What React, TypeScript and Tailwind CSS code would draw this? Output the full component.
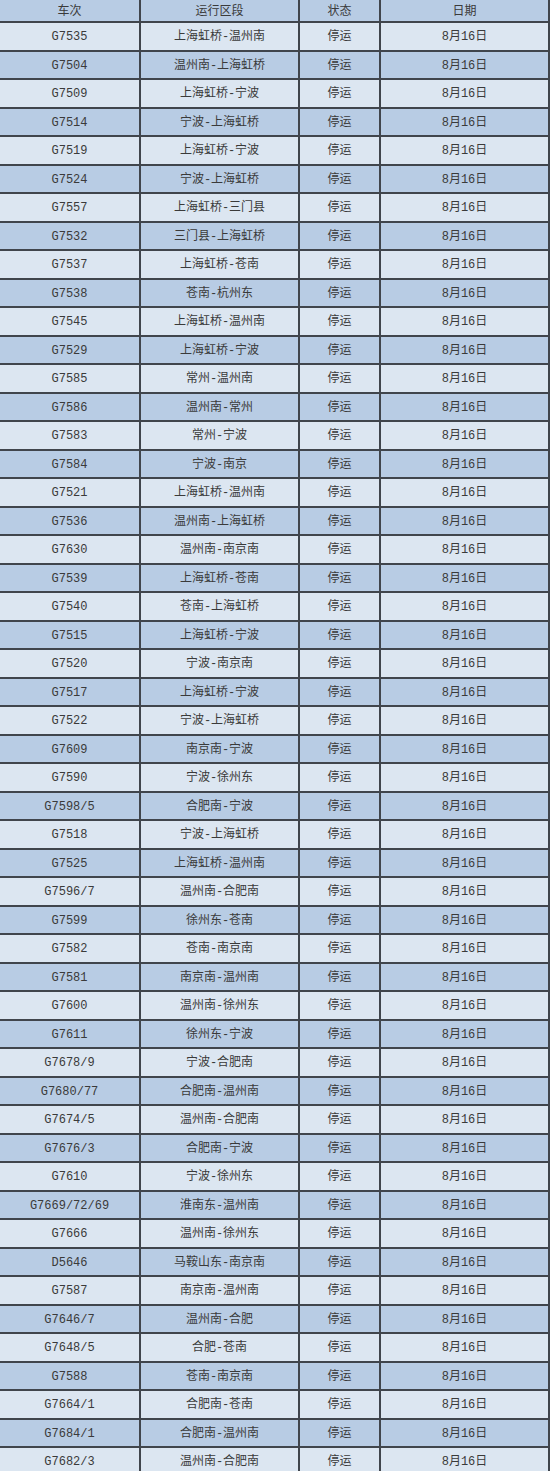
import React from 'react';

// [车次, 运行区段]
const rows: [string, string][] = [
  ['G7535', '上海虹桥-温州南'],
  ['G7504', '温州南-上海虹桥'],
  ['G7509', '上海虹桥-宁波'],
  ['G7514', '宁波-上海虹桥'],
  ['G7519', '上海虹桥-宁波'],
  ['G7524', '宁波-上海虹桥'],
  ['G7557', '上海虹桥-三门县'],
  ['G7532', '三门县-上海虹桥'],
  ['G7537', '上海虹桥-苍南'],
  ['G7538', '苍南-杭州东'],
  ['G7545', '上海虹桥-温州南'],
  ['G7529', '上海虹桥-宁波'],
  ['G7585', '常州-温州南'],
  ['G7586', '温州南-常州'],
  ['G7583', '常州-宁波'],
  ['G7584', '宁波-南京'],
  ['G7521', '上海虹桥-温州南'],
  ['G7536', '温州南-上海虹桥'],
  ['G7630', '温州南-南京南'],
  ['G7539', '上海虹桥-苍南'],
  ['G7540', '苍南-上海虹桥'],
  ['G7515', '上海虹桥-宁波'],
  ['G7520', '宁波-南京南'],
  ['G7517', '上海虹桥-宁波'],
  ['G7522', '宁波-上海虹桥'],
  ['G7609', '南京南-宁波'],
  ['G7590', '宁波-徐州东'],
  ['G7598/5', '合肥南-宁波'],
  ['G7518', '宁波-上海虹桥'],
  ['G7525', '上海虹桥-温州南'],
  ['G7596/7', '温州南-合肥南'],
  ['G7599', '徐州东-苍南'],
  ['G7582', '苍南-南京南'],
  ['G7581', '南京南-温州南'],
  ['G7600', '温州南-徐州东'],
  ['G7611', '徐州东-宁波'],
  ['G7678/9', '宁波-合肥南'],
  ['G7680/77', '合肥南-温州南'],
  ['G7674/5', '温州南-合肥南'],
  ['G7676/3', '合肥南-宁波'],
  ['G7610', '宁波-徐州东'],
  ['G7669/72/69', '淮南东-温州南'],
  ['G7666', '温州南-徐州东'],
  ['D5646', '马鞍山东-南京南'],
  ['G7587', '南京南-温州南'],
  ['G7646/7', '温州南-合肥'],
  ['G7648/5', '合肥-苍南'],
  ['G7588', '苍南-南京南'],
  ['G7664/1', '合肥南-苍南'],
  ['G7684/1', '合肥南-温州南'],
  ['G7682/3', '温州南-合肥南'],
];

const cols = 'grid grid-cols-[141px_159px_81px_169px]';
const cell = 'flex items-center justify-center pt-[2px] border-r-2 border-[#40454c]';

function Row({ cells, dark, header }: { cells: string[]; dark: boolean; header?: boolean }) {
  return (
    <div
      className={`${cols} ${header ? 'h-[23px]' : 'h-[28.5px]'} border-b-2 border-[#40454c] ${
        dark ? 'bg-[#b8cce4]' : 'bg-[#dce6f1]'
      }`}
    >
      {cells.map((c, i) => (
        <div key={i} className={cell}>
          {c}
        </div>
      ))}
    </div>
  );
}

export default function App() {
  return (
    <div
      className="w-[550px] h-[1471px] overflow-hidden bg-[#dce6f1] text-[12px] leading-none text-[#3a3a3a]"
      style={{ fontFamily: '"Liberation Mono", "Noto Sans CJK SC", monospace' }}
    >
      <Row cells={['车次', '运行区段', '状态', '日期']} dark header />
      {rows.map(([no, route], i) => (
        <Row key={no + i} cells={[no, route, '停运', '8月16日']} dark={i % 2 === 1} />
      ))}
    </div>
  );
}
